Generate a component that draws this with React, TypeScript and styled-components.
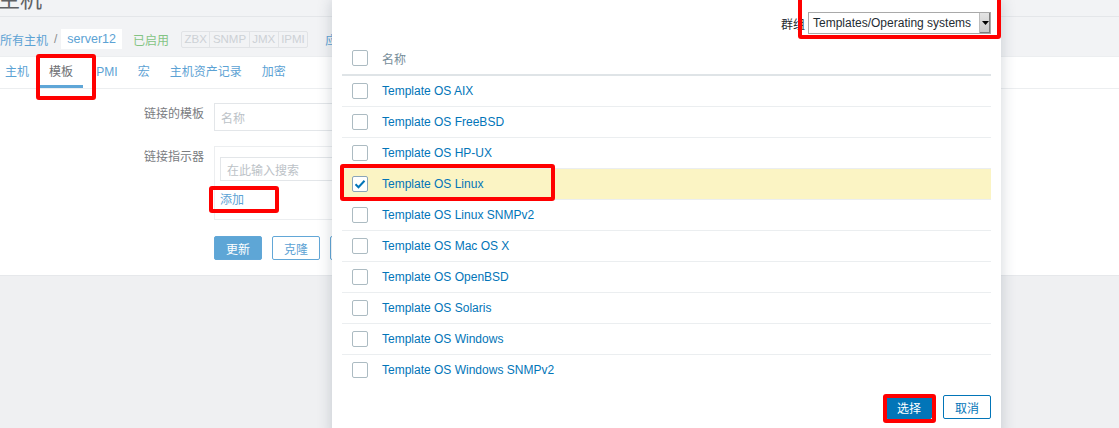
import styled, { createGlobalStyle } from "styled-components";

const GlobalStyle = createGlobalStyle`
  html, body {
    margin: 0;
    padding: 0;
  }
  body {
    font-family: "Liberation Sans", "Noto Sans CJK SC", sans-serif;
    font-size: 12px;
    background: #f0f1f3;
  }
`;

const templates = [
  "Template OS AIX",
  "Template OS FreeBSD",
  "Template OS HP-UX",
  "Template OS Linux",
  "Template OS Linux SNMPv2",
  "Template OS Mac OS X",
  "Template OS OpenBSD",
  "Template OS Solaris",
  "Template OS Windows",
  "Template OS Windows SNMPv2",
];

const tabs = ["主机", "模板", "IPMI", "宏", "主机资产记录", "加密"];

export default function App() {
  return (
    <>
      <GlobalStyle />
      <Page>
        <Header>
          <Title>主机</Title>
        </Header>
        <Breadcrumbs>
          <Crumb>所有主机</Crumb>
          <Slash>/</Slash>
          <CurrentHost>server12</CurrentHost>
          <Enabled>已启用</Enabled>
          <TagGroup>
            {["ZBX", "SNMP", "JMX", "IPMI"].map((t) => (
              <Tag key={t}>{t}</Tag>
            ))}
          </TagGroup>
          <Crumb>应用集</Crumb>
        </Breadcrumbs>

        <TabBar>
          {tabs.map((t) => (
            <TabItem key={t} $active={t === "模板"}>
              {t}
            </TabItem>
          ))}
        </TabBar>

        <FormPanel>
          <FormGrid>
            <Label>链接的模板</Label>
            <div>
              <TextInput $h={28}>名称</TextInput>
            </div>
            <Label>链接指示器</Label>
            <LinkBox>
              <TextInput $h={24} $w={300}>
                在此输入搜索
              </TextInput>
              <AddLink>添加</AddLink>
            </LinkBox>
            <span />
            <ButtonRow>
              <FadedButton $filled>更新</FadedButton>
              <FadedButton>克隆</FadedButton>
              <FadedButton>全克隆</FadedButton>
            </ButtonRow>
          </FormGrid>
        </FormPanel>

        <Modal>
          <FilterRow>
            <FilterLabel>群组</FilterLabel>
            <SelectBox>
              <SelectText>Templates/Operating systems</SelectText>
              <SelectArrow>
                <svg width="7" height="4" viewBox="0 0 7 4">
                  <path d="M0 0h7L3.5 4z" fill="#000" />
                </svg>
              </SelectArrow>
            </SelectBox>
          </FilterRow>

          <Table>
            <HeadRow>
              <Checkbox />
              <HeadCell>名称</HeadCell>
            </HeadRow>
            {templates.map((name) => {
              const checked = name === "Template OS Linux";
              return (
                <Row key={name} $selected={checked}>
                  <Checkbox $checked={checked}>
                    {checked && (
                      <svg width="12" height="10" viewBox="0 0 12 10">
                        <path
                          d="M1.5 5.2l3 3 6-6.4"
                          fill="none"
                          stroke="#0275b8"
                          strokeWidth="2"
                        />
                      </svg>
                    )}
                  </Checkbox>
                  <RowLink>{name}</RowLink>
                </Row>
              );
            })}
          </Table>

          <Footer>
            <ModalButton $filled>选择</ModalButton>
            <ModalButton>取消</ModalButton>
          </Footer>
        </Modal>

        <Callout $x={36} $y={54} $w={60} $h={46} />
        <Callout $x={209} $y={186} $w={70} $h={27} />
        <Callout $x={798} $y={-6} $w={203} $h={45} />
        <Callout $x={340} $y={164} $w={215} $h={37} />
        <Callout $x={883} $y={394} $w={53} $h={29} />
      </Page>
    </>
  );
}

const Page = styled.div`
  position: relative;
  width: 100%;
  height: 428px;
  overflow: hidden;
  background: #eff0f2;
`;

const Header = styled.div`
  height: 16px;
  overflow: hidden;
  background: #f2f3f5;
  border-bottom: 1px solid #e4e6e9;
`;

const Title = styled.h1`
  margin: -13px 0 0 -2px;
  font-size: 22px;
  font-weight: normal;
  line-height: 26px;
  color: #5f6164;
`;

const Breadcrumbs = styled.div`
  display: flex;
  align-items: center;
  height: 20px;
  padding: 12px 0 7px 0;
  background: #f2f3f5;
`;

const Crumb = styled.span`
  color: #5ca2d4;
  font-size: 12px;
  &:last-child {
    margin-left: 17px;
  }
`;

const Slash = styled.span`
  margin: 0 4px 0 6px;
  color: #8a8c8e;
`;

const CurrentHost = styled.span`
  display: flex;
  align-items: center;
  height: 20px;
  padding: 0 6px;
  background: #fff;
  color: #5ca2d4;
  font-size: 12.5px;
`;

const Enabled = styled.span`
  margin-left: 11px;
  color: #84c484;
`;

const TagGroup = styled.div`
  display: flex;
  margin-left: 12px;
  border: 1px solid #e1e3e6;
  border-radius: 2px;
  height: 15px;
`;

const Tag = styled.span`
  padding: 0 2.5px;
  font-size: 11.5px;
  line-height: 15px;
  color: #cdd1d5;
  & + & {
    border-left: 1px solid #e1e3e6;
  }
`;

const TabBar = styled.div`
  display: flex;
  height: 31px;
  margin-left: -5px;
  padding-left: 0;
  background: #fff;
  border-top: 1px solid #eceef0;
  border-bottom: 1px solid #eceef0;
`;

const TabItem = styled.div<{ $active?: boolean }>`
  position: relative;
  padding: 0 10px;
  line-height: 31px;
  color: ${({ $active }) => ($active ? "#6e7073" : "#5ca2d4")};
  &::after {
    content: "";
    display: ${({ $active }) => ($active ? "block" : "none")};
    position: absolute;
    left: 0;
    right: 0;
    bottom: 0;
    height: 3px;
    background: #5fa6d7;
  }
`;

const FormPanel = styled.div`
  background: #fff;
  padding: 14px 0 15px 0;
  border-bottom: 1px solid #e6e8eb;
`;

const FormGrid = styled.div`
  display: grid;
  grid-template-columns: 204px 1fr;
  column-gap: 10px;
  row-gap: 15px;
`;

const Label = styled.div`
  text-align: right;
  line-height: 22px;
  color: #7a7c7f;
`;

const TextInput = styled.div<{ $h: number; $w?: number }>`
  box-sizing: border-box;
  width: ${({ $w }) => $w ?? 450}px;
  height: ${({ $h }) => $h}px;
  padding: 0 6px;
  display: flex;
  align-items: center;
  border: 1px solid #e3e6e9;
  color: #bcc2c7;
`;

const LinkBox = styled.div`
  box-sizing: border-box;
  width: 450px;
  padding: 10px 5px 10px 5px;
  border: 1px solid #eceef0;
`;

const AddLink = styled.div`
  margin-top: 10px;
  line-height: 18px;
  color: #5ca2d4;
`;

const ButtonRow = styled.div`
  display: flex;
  gap: 10px;
  padding-top: 1px;
`;

const FadedButton = styled.div<{ $filled?: boolean }>`
  box-sizing: border-box;
  height: 24px;
  width: 48px;
  display: flex;
  align-items: center;
  justify-content: center;
  border: 1px solid #62a7d7;
  border-radius: 2px;
  background: ${({ $filled }) => ($filled ? "#5ea6d6" : "#fff")};
  color: ${({ $filled }) => ($filled ? "#fff" : "#5ca2d4")};
`;

const Modal = styled.div`
  position: absolute;
  left: 332px;
  top: 0;
  width: 669px;
  height: 440px;
  box-sizing: border-box;
  padding: 12px 10px 0 10px;
  background: #fff;
  box-shadow: 0 0 14px rgba(40, 60, 80, 0.22);
`;

const FilterRow = styled.div`
  display: flex;
  justify-content: flex-end;
  align-items: center;
  gap: 3px;
`;

const FilterLabel = styled.span`
  color: #1f2c33;
`;

const SelectBox = styled.div`
  display: flex;
  align-items: stretch;
  width: 183px;
  height: 22px;
  box-sizing: border-box;
  border: 1px solid #a9a9a9;
  background: #fff;
`;

const SelectText = styled.span`
  flex: 1;
  padding-left: 4px;
  line-height: 20px;
  color: #1f2c33;
  white-space: nowrap;
`;

const SelectArrow = styled.span`
  width: 10px;
  display: flex;
  align-items: center;
  justify-content: center;
  background: linear-gradient(#e4e4e4, #c8c8c8);
  border-left: 1px solid #bdbdbd;
  box-shadow: inset -1px -1px 0 #7d7d7d;
`;

const Table = styled.div`
  margin-top: 8px;
`;

const HeadRow = styled.div`
  display: flex;
  align-items: center;
  gap: 14px;
  height: 32px;
  padding-left: 10px;
  border-bottom: 2px solid #dfe4e7;
`;

const HeadCell = styled.span`
  color: #768d99;
`;

const Row = styled.div<{ $selected?: boolean }>`
  display: flex;
  align-items: center;
  gap: 14px;
  height: 30px;
  padding-left: 10px;
  background: ${({ $selected }) => ($selected ? "#fbf4c4" : "#fff")};
  border-bottom: 1px solid #ebeef0;
  &:last-child {
    border-bottom: none;
  }
`;

const Checkbox = styled.span<{ $checked?: boolean }>`
  box-sizing: border-box;
  width: 16px;
  height: 16px;
  display: flex;
  align-items: center;
  justify-content: center;
  border: 1px solid ${({ $checked }) => ($checked ? "#8aa5b8" : "#acbbc2")};
  border-radius: 2px;
  background: #fff;
`;

const RowLink = styled.span`
  color: #0275b8;
`;

const Footer = styled.div`
  display: flex;
  justify-content: flex-end;
  gap: 11px;
  padding-top: 10px;
`;

const ModalButton = styled.div<{ $filled?: boolean }>`
  box-sizing: border-box;
  height: 24px;
  padding: 0 ${({ $filled }) => ($filled ? 10 : 11)}px;
  display: flex;
  align-items: center;
  border: 1px solid #0275b8;
  border-radius: 2px;
  background: ${({ $filled }) => ($filled ? "#0275b8" : "#fff")};
  color: ${({ $filled }) => ($filled ? "#fff" : "#0275b8")};
`;

const Callout = styled.div<{ $x: number; $y: number; $w: number; $h: number }>`
  position: absolute;
  left: ${({ $x }) => $x}px;
  top: ${({ $y }) => $y}px;
  width: ${({ $w }) => $w}px;
  height: ${({ $h }) => $h}px;
  box-sizing: border-box;
  border: 4px solid #ff0000;
  border-radius: 3px;
  pointer-events: none;
`;
